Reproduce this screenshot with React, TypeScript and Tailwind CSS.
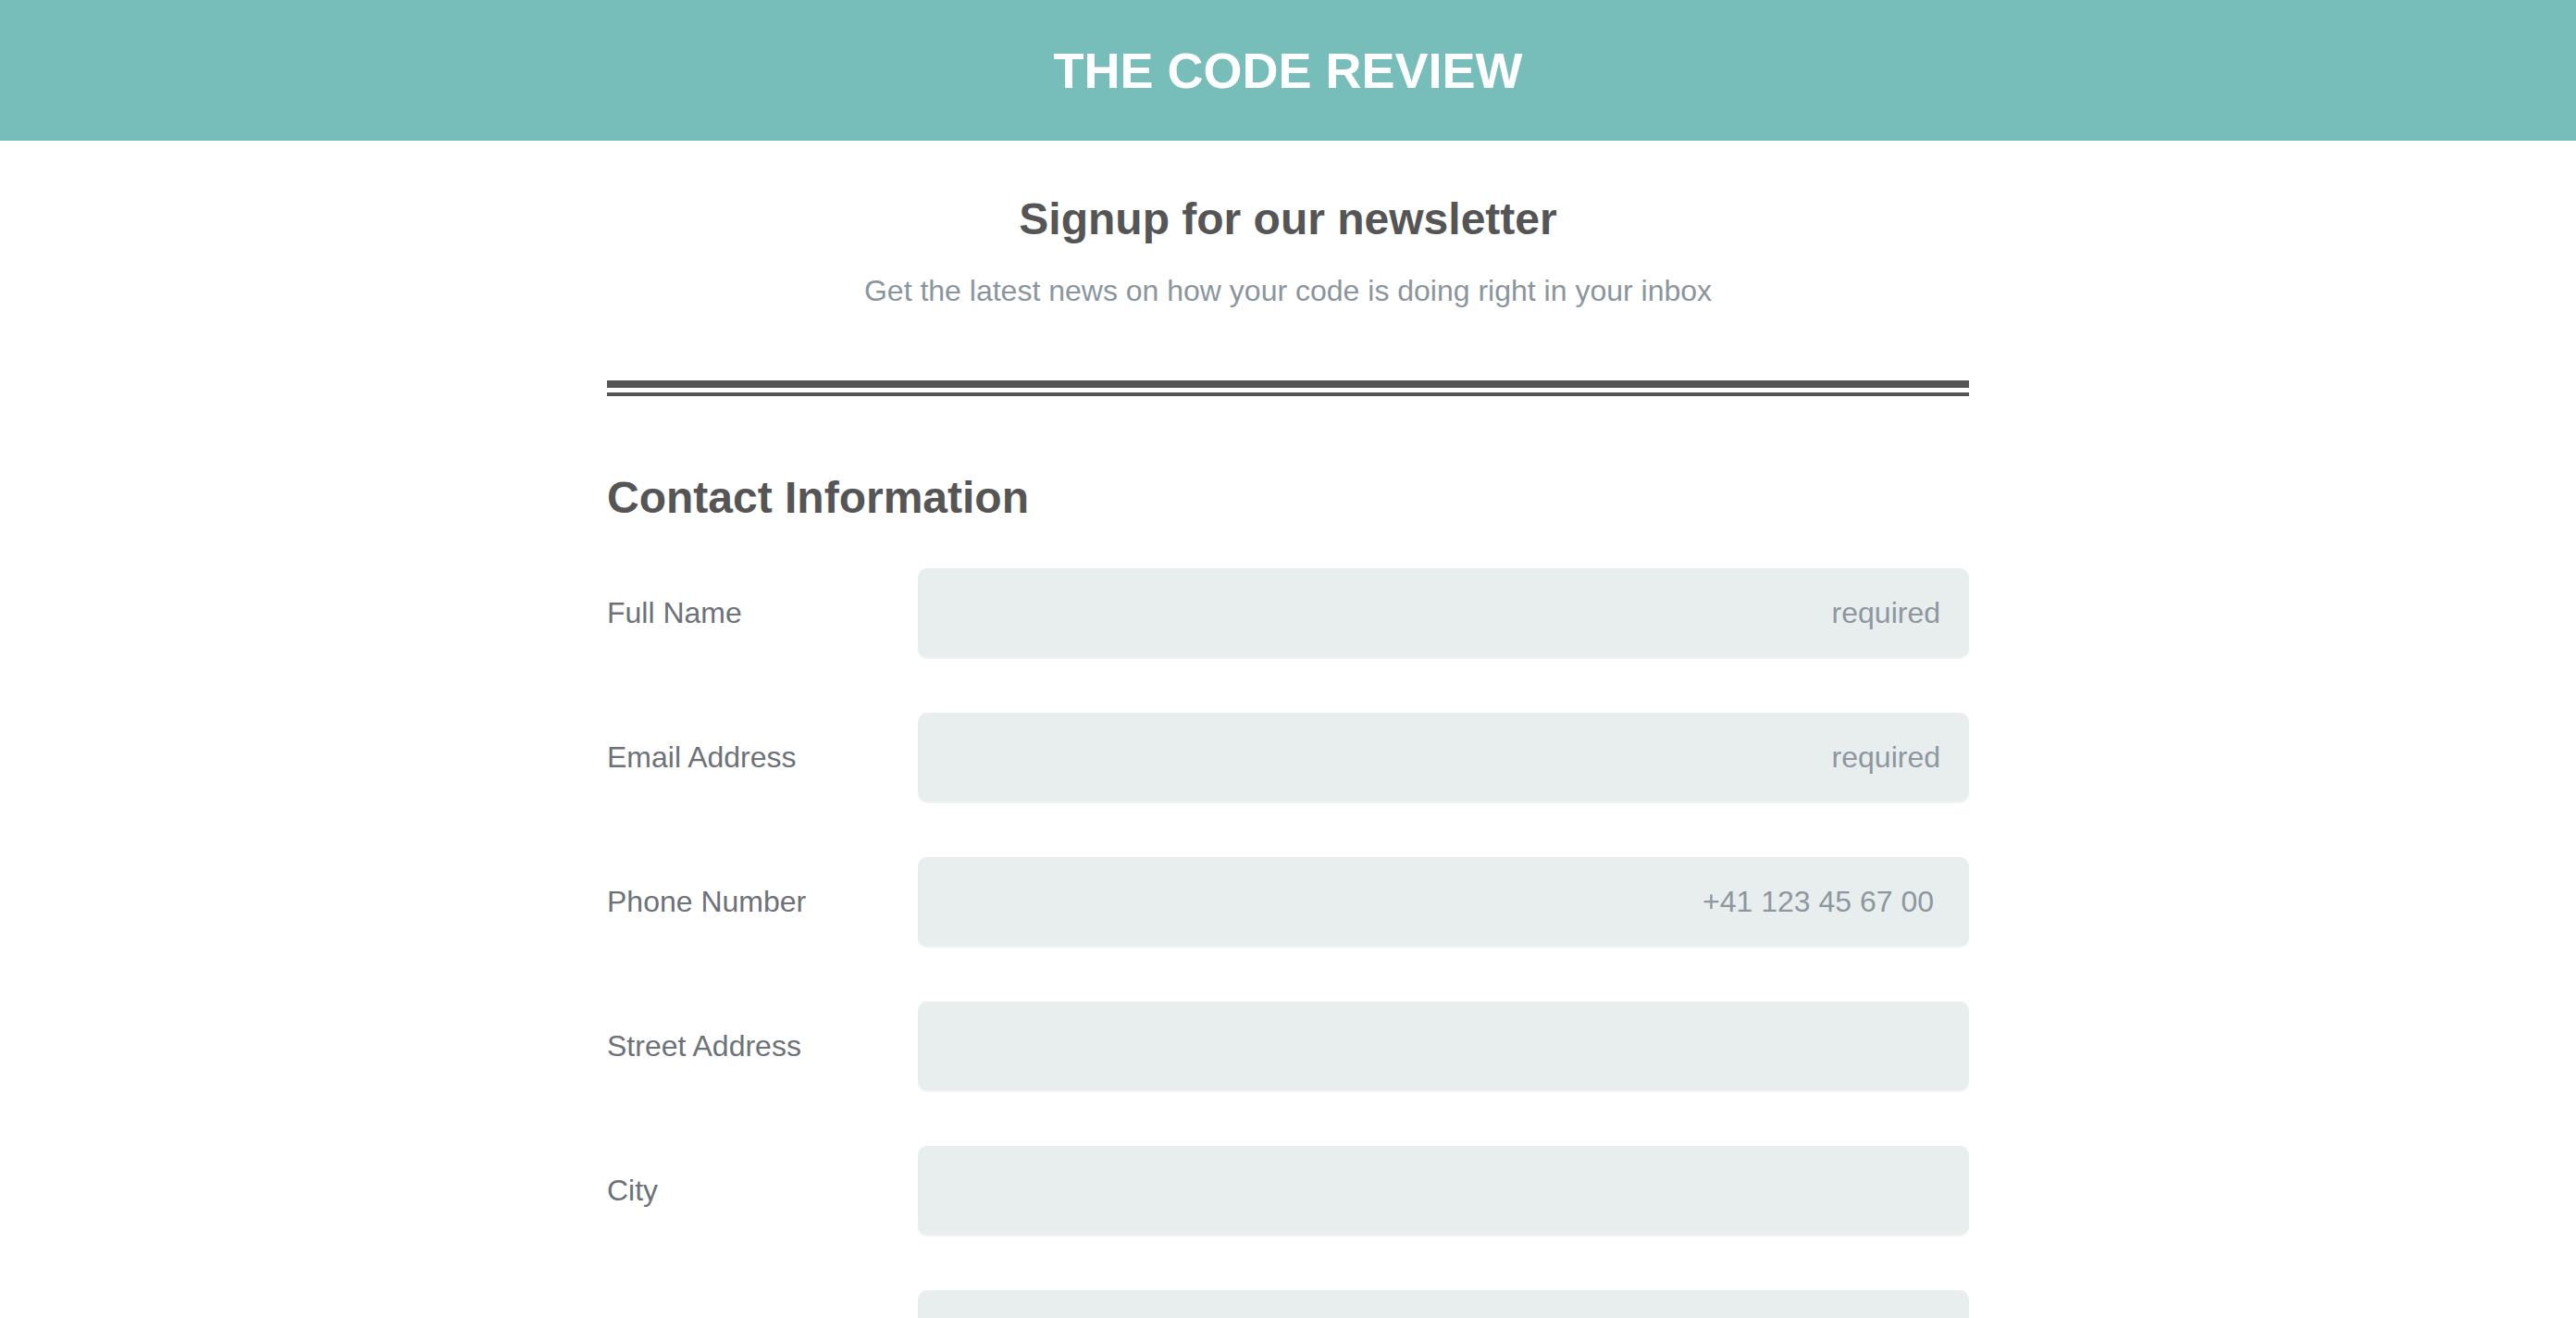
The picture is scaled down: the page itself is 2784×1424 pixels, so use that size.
import React from "react";

const rows: { label: string; placeholder?: string; phone?: boolean }[] = [
  { label: "Full Name", placeholder: "required" },
  { label: "Email Address", placeholder: "required" },
  { label: "Phone Number", placeholder: "+41 123 45 67 00", phone: true },
  { label: "Street Address" },
  { label: "City" },
  { label: "" },
];

export default function App() {
  return (
    <div className="min-h-screen bg-white font-['Liberation_Sans',Arial,sans-serif]">
      <header className="h-[152px] bg-[#77bdba] flex items-center justify-center">
        <h1 className="text-[54px] font-bold text-white leading-none">THE CODE REVIEW</h1>
      </header>
      <main className="w-[1472px] mx-auto">
        <div className="pt-[57px] flex flex-col items-center">
          <h2 className="text-[48px] font-bold text-[#555555] leading-[55px]">Signup for our newsletter</h2>
          <p className="mt-[32px] text-[32px] text-[#8b959d] leading-[37px]">
            Get the latest news on how your code is doing right in your inbox
          </p>
        </div>
        <div className="mt-[78px] flex flex-col gap-[5px]">
          <div className="h-[8px] bg-[#555555]" />
          <div className="h-[4px] bg-[#555555]" />
        </div>
        <h3 className="mt-[82px] text-[48px] font-bold text-[#555555] leading-[55px]">Contact Information</h3>
        <form className="mt-[49px] flex flex-col gap-[60px] pb-[80px]">
          {rows.map((r, i) => (
            <div key={i} className="flex items-center">
              <label className="w-[336px] shrink-0 text-[32px] text-[#6c7277] leading-[37px]">{r.label}</label>
              <input
                type="text"
                placeholder={r.placeholder}
                className={
                  r.phone
                    ? "flex-1 h-[96px] rounded-[10px] bg-[#e8eeee] shadow-[0_2px_0_#f1f4f4] text-right pr-[38px] text-[32px] text-[#555555] placeholder:text-[#8e979f] outline-none"
                    : "flex-1 h-[96px] rounded-[10px] bg-[#e8eeee] shadow-[0_2px_0_#f1f4f4] text-right pr-[31px] text-[32px] text-[#555555] placeholder:text-[#8e979f] outline-none"
                }
              />
            </div>
          ))}
        </form>
      </main>
    </div>
  );
}
